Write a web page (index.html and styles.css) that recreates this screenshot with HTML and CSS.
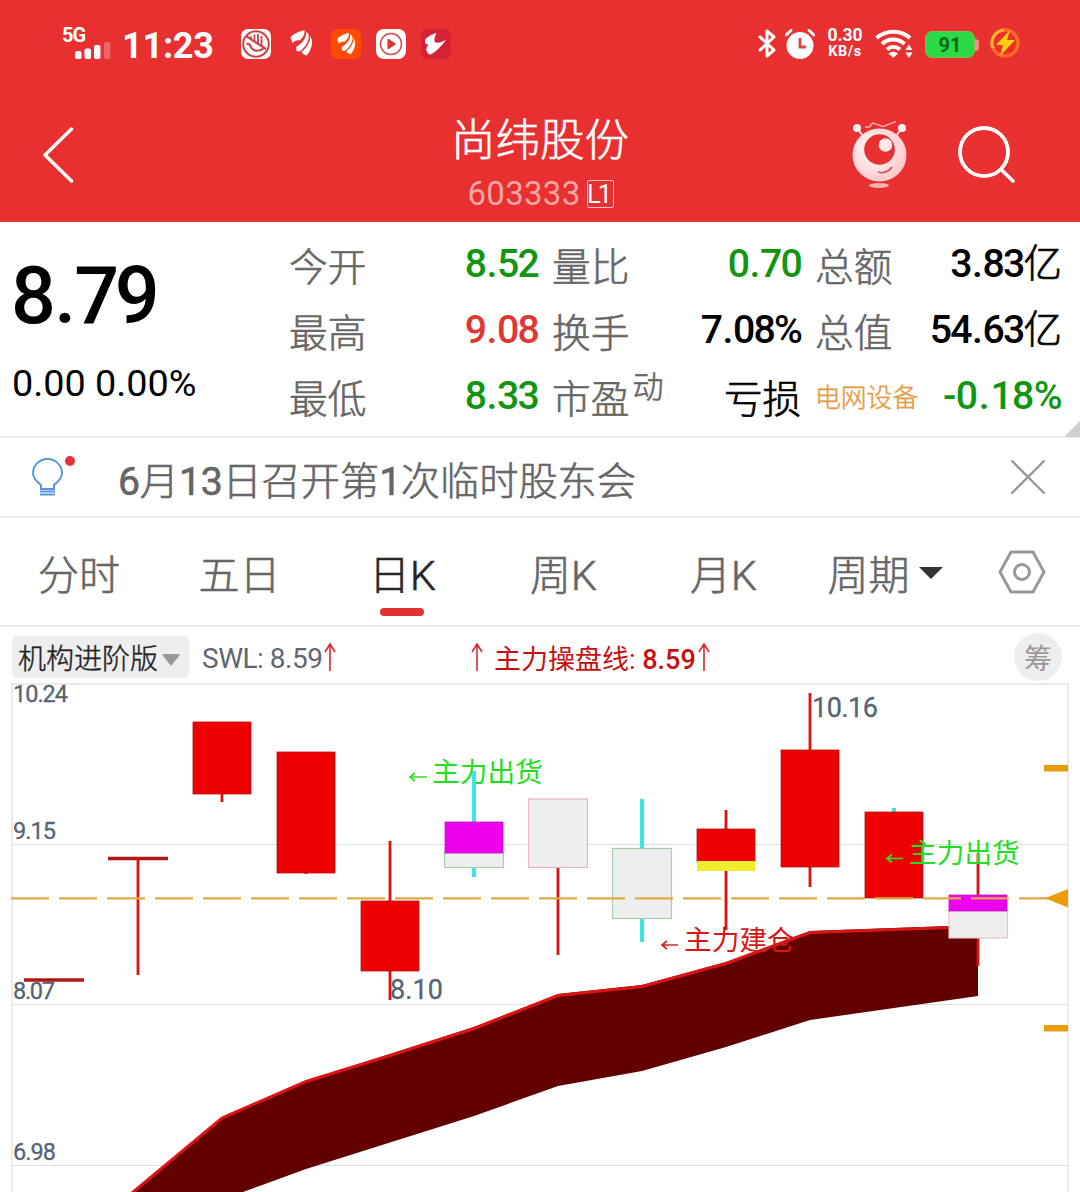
FILE: index.html
```html
<!DOCTYPE html>
<html lang="zh-CN">
<head>
<meta charset="utf-8">
<title>尚纬股份 603333</title>
<link rel="stylesheet" href="styles.css">
</head>
<body>
<header class="top">
  <div class="status">
    <div class="signal">
      <span class="net">5G</span>
      <svg width="36" height="17" viewBox="0 0 36 17"><g fill="#fff"><rect x="0" y="9" width="6.500" height="8" rx="2"/><rect x="9.500" y="6.500" width="6.500" height="10.500" rx="2"/><rect x="19" y="3" width="6.500" height="14" rx="2"/><rect x="29" y="0" width="6.500" height="17" rx="2" opacity=".25"/></g></svg>
    </div>
    <span class="clock">11:23</span>
    <div class="apps">
      <svg width="30" height="30" viewBox="0 0 30 30"><rect width="30" height="30" rx="7" fill="#fff"/><circle cx="15" cy="15" r="12.800" fill="none" stroke="#c94444" stroke-width="2"/><path d="M5 7 25 20" stroke="#c94444" stroke-width="2.200"/><path d="M10 7.500v2.500M13.500 5.500v7M17 5v10M20.500 7v10" stroke="#c94444" stroke-width="1.800"/><path d="M5.500 14.500 8.500 15.500 10.500 19C13 23 19 22.500 24 18.500" fill="none" stroke="#c94444" stroke-width="2.200"/></svg>
      <svg width="30" height="30" viewBox="0 0 30 30"><g fill="#fff"><path d="M18.500 1C12 3 7 5 4.500 8.500L6.500 14c2-2 4-3 7-2.500C17 9 19 5 18.500 1z"/><path d="M20.500 2.500C20 9 17 14 10 18l.5 4 3 .5C20 18 23 12 22.800 6z"/><path d="M24 6.500c.5 6-2.500 11.500-8.500 16.500l1.500 2 3.500 1.500C25 22 26.500 16 25.800 11z"/></g></svg>
      <svg width="30" height="30" viewBox="0 0 30 30"><rect width="30" height="30" rx="7" fill="#ff4a00"/><g fill="#fff" transform="translate(2.300 3) scale(.84)"><path d="M18.500 1C12 3 7 5 4.500 8.500L6.500 14c2-2 4-3 7-2.500C17 9 19 5 18.500 1z"/><path d="M20.500 2.500C20 9 17 14 10 18l.5 4 3 .5C20 18 23 12 22.800 6z"/><path d="M24 6.500c.5 6-2.500 11.500-8.500 16.500l1.500 2 3.500 1.500C25 22 26.500 16 25.800 11z"/></g></svg>
      <svg width="30" height="30" viewBox="0 0 30 30"><rect width="30" height="30" rx="8" fill="#fff"/><circle cx="15" cy="15" r="10.500" fill="none" stroke="#d84a4a" stroke-width="1.500"/><path d="M12 10v10l7.500-5z" fill="#d33" stroke="#d33" stroke-linejoin="round"/></svg>
      <svg width="30" height="30" viewBox="0 0 30 30"><rect width="30" height="30" rx="7" fill="#d32334"/><path d="M15.500 4C11 5.500 5 8 4 11.500c-.5 3 1.500 4 3.500 4-1.500 2-2.500 4-2 6 .5 2 2 4 4.500 4 3-2.500 7-4.500 9-7.500 2-2 4-4.500 6-7-4 2-8 3.500-10.500 2.500-2-1.500-1-5 1-9.500z" fill="#fff"/></svg>
    </div>
    <div class="sys">
      <svg class="bt" width="20" height="32" viewBox="0 0 20 32"><path d="M2 8 17 22 10 28V3l7 6L2 23" fill="none" stroke="#fff" stroke-width="3" stroke-linejoin="round"/></svg>
      <svg class="alarm" width="30" height="30" viewBox="0 0 30 30"><circle cx="15" cy="16.500" r="13.500" fill="#fff"/><path d="M1 6 6 1.500M29 6 24 1.500" stroke="#fff" stroke-width="3" stroke-linecap="round"/><path d="M15 9v9h6" fill="none" stroke="#d44" stroke-width="2.800"/></svg>
      <span class="speed"><b>0.30</b><b>KB/s</b></span>
      <svg class="wifi" width="40" height="30" viewBox="0 0 40 30"><g fill="none" stroke="#fff" stroke-width="4"><path d="M1.500 9C11 .5 26 .5 35 9"/><path d="M7 15c6-6 16-6 22.500 0"/><path d="M12 20.500c4-3.500 9-3.500 13 0"/></g><path d="M13.500 24.500c3-2.500 6.500-2.500 9.500 0L18.200 29z" fill="#fff"/><path d="M30.500 21h7L34 15.500zM30.500 23.500h7L34 29z" fill="#fff"/></svg>
      <span class="battery">91</span>
      <svg class="charge" width="32" height="32" viewBox="0 0 32 32"><circle cx="16" cy="16" r="13" fill="none" stroke="#ff6b24" stroke-width="3.500"/><path d="M4 21A13 13 0 0 1 15 3" fill="none" stroke="#ffb32e" stroke-width="3"/><path d="M21 3 7 18h7l-3 11 15-16h-8z" fill="#ffcf08"/></svg>
    </div>
  </div>
  <div class="nav">
    <svg class="back" width="32" height="56" viewBox="0 0 32 56"><path d="M28.500 2 2 28l26.500 26" fill="none" stroke="#fff" stroke-width="3.500" stroke-linecap="round" stroke-linejoin="round"/></svg>
    <div class="title">
      <h1>尚纬股份</h1>
      <div class="code"><span>603333</span><i>L1</i></div>
    </div>
    <svg class="robot" width="58" height="70" viewBox="850 119 58 70">
      <defs><radialGradient id="skin" cx=".4" cy=".4" r=".65"><stop offset="0" stop-color="#fff"/><stop offset="1" stop-color="#ffc6c9"/></radialGradient></defs>
      <path d="M865 127h4l4-4 10 3.500 13-5" fill="none" stroke="#ffc3c3" stroke-width="1.300"/>
      <path d="M857 128l6 8M902 128l-6 8" stroke="#ffe5e5" stroke-width="2"/>
      <circle cx="857" cy="128" r="4" fill="#fff0f0"/><circle cx="902" cy="128" r="4" fill="#fff0f0"/>
      <ellipse cx="879.500" cy="155" rx="27" ry="26.500" fill="url(#skin)"/>
      <circle cx="879.500" cy="149.500" r="15.300" fill="#e83030"/><circle cx="885.500" cy="145" r="6.800" fill="#ffe9e9"/>
      <path d="M878 172c5 1.500 11 0 14-5" fill="none" stroke="#dd5555" stroke-width="1.800"/>
      <ellipse cx="879" cy="185.500" rx="10" ry="2.500" fill="#ffb3b3"/>
    </svg>
    <svg class="search" width="60" height="60" viewBox="956 124 60 60"><g fill="none" stroke="#fff" stroke-width="3.800" stroke-linecap="round"><circle cx="984" cy="152" r="24"/><path d="M1001 169.500l12 11.500"/></g></svg>
  </div>
</header>

<section class="quote">
  <div class="last"><strong>8<u>.</u>79</strong><span>0.00 0.00%</span></div>
  <dl class="stats">
    <div><dt>今开</dt><dd class="down">8<u>.</u>52</dd></div>
    <div><dt>量比</dt><dd class="down">0<u>.</u>70</dd></div>
    <div><dt>总额</dt><dd>3<u>.</u>83<em>亿</em></dd></div>
    <div><dt>最高</dt><dd class="up">9<u>.</u>08</dd></div>
    <div><dt>换手</dt><dd>7<u>.</u>08%</dd></div>
    <div><dt>总值</dt><dd>54<u>.</u>63<em>亿</em></dd></div>
    <div><dt>最低</dt><dd class="down">8<u>.</u>33</dd></div>
    <div><dt>市盈<sup>动</sup></dt><dd class="word"><em>亏损</em></dd></div>
    <div><dt class="sector">电网设备</dt><dd class="down wide">-0<u>.</u>18%</dd></div>
  </dl>
  <i class="corner"></i>
</section>

<section class="notice">
  <svg width="50" height="44" viewBox="30 456 50 44"><g fill="none" stroke="#5b97d8" stroke-width="2"><path d="M41 490v-4c-4-3-8-7-8-12a14.500 14 0 0 1 29 0c0 5-4 9-8 12v4z"/><path d="M40 492.500h15M40 495.500h15"/></g><circle cx="70" cy="462" r="5" fill="#e03434"/></svg>
  <p><b>6</b>月<b>13</b>日召开第<b>1</b>次临时股东会</p>
  <svg class="close" width="36" height="36" viewBox="0 0 36 36"><path d="M2 2l32 32M34 2 2 34" stroke="#999" stroke-width="2.400" stroke-linecap="round"/></svg>
</section>

<nav class="tabs">
  <span>分时</span><span>五日</span><span class="on">日K</span><span>周K</span><span>月K</span>
  <span class="period">周期<svg width="24" height="12" viewBox="0 0 24 12"><path d="M0 0h24L12 12z" fill="#333"/></svg></span>
  <svg class="gear" width="48" height="44" viewBox="0 0 48 44"><g fill="none" stroke="#999" stroke-width="3" stroke-linejoin="round"><path d="M13 2h22l11 20-11 20H13L2 22z"/><circle cx="24" cy="22" r="7.500"/></g></svg>
</nav>

<section class="legend">
  <span class="select">机构进阶版<svg width="18" height="12" viewBox="0 0 18 12"><path d="M1 0h16q1 1 0 2L9 12 1 2Q0 1 1 0z" fill="#999"/></svg></span>
  <span class="swl">SWL: 8.59</span>
  <svg class="rise" width="12" height="30" viewBox="0 0 12 30"><path d="M6 2v27M1 10 6 2l5 8" fill="none" stroke="#d52a2a" stroke-width="1.600"/></svg>
  <svg class="rise second" width="12" height="30" viewBox="0 0 12 30"><path d="M6 2v27M1 10 6 2l5 8" fill="none" stroke="#d52a2a" stroke-width="1.600"/></svg>
  <span class="main">主力操盘线: <b>8.59</b></span>
  <svg class="rise" width="12" height="30" viewBox="0 0 12 30"><path d="M6 2v27M1 10 6 2l5 8" fill="none" stroke="#d52a2a" stroke-width="1.600"/></svg>
  <span class="chips">筹</span>
</section>

<svg class="chart" width="1080" height="509" viewBox="0 683 1080 509">
  <g class="grid"><path d="M12 1192V684H1068V1192"/><path d="M12 844.500H1068M12 1004.500H1068M12 1165.500H1068" class="thin"/></g>
  <path class="band" d="M133 1192 222 1117 306 1081 390 1054 474 1027 558 994 642 985 726 962 810 931 978 925V996L810 1020 726 1047 642 1071 558 1086 474 1116 306 1169 243 1192z"/>
  <path class="trend" d="M132 1193 222 1118 306 1081.500 390 1055.500 474 1028.500 558 995.500 642 986.500 726 963.500 810 932.500 978 926.500"/>
  <g class="axis">
    <text x="13" y="702" textLength="55">10.24</text><text x="13" y="839" textLength="43">9.15</text><text x="13" y="999" textLength="42">8.07</text><text x="13" y="1160" textLength="43">6.98</text>
  </g>
  <g class="signal-text">
    <text x="432" y="781.500" class="sell">主力出货</text><path d="M427 777H410M415 773l-5 4 5 4" class="sell-arrow"/>
    <text x="684" y="949.500" class="buy">主力建仓</text><path d="M678 945H662M667 941l-5 4 5 4" class="buy-arrow"/>
  </g>
  <g class="flat"><path d="M24 980H84M108 858.500H168"/></g>
  <g class="wick"><path d="M138 858V975M222 793V802M306 872V874M390 841V1000M558 866V955M726 810V930M810 693V887M978 853V966"/></g>
  <g class="wick cool"><path d="M474 771V823M474 866V877M642 799V849M642 917V942M894 808V813"/></g>
  <g class="red"><rect x="193" y="722" width="58" height="72"/><rect x="277" y="752" width="58" height="121"/><rect x="361" y="901" width="58" height="70"/><rect x="697" y="829" width="58" height="33"/><rect x="781" y="750" width="58" height="117"/><rect x="865" y="812" width="58" height="86"/></g>
  <g class="gray"><rect x="444.500" y="852.500" width="59" height="15" stroke="#a9cfa9"/><rect x="528.500" y="799" width="59" height="68.500" stroke="#e9b5b5"/><rect x="612.500" y="848.500" width="59" height="70" stroke="#a9cfa9"/><rect x="949" y="910" width="58.500" height="28" stroke="#edc0c0"/></g>
  <g class="magenta"><rect x="445" y="822" width="58" height="31"/><rect x="949" y="895" width="58" height="16"/></g>
  <rect x="697" y="861" width="58" height="10" fill="#f0ec30"/>
  <path d="M11 898.300H1048" class="cost"/>
  <path d="M1045 898.300 1068 889V907.500zM1044 765h24v6.500h-24zM1044 1025h24v6.500h-24z" fill="#eb9d08"/>
  <text x="909" y="862.500" class="sell">主力出货</text><path d="M903 858.500H887M892 854.500l-5 4 5 4" class="sell-arrow"/>
  <g class="extreme"><text x="812" y="717" textLength="66">10.16</text><text x="390" y="999" textLength="53">8.10</text></g>
</svg>
</body>
</html>
```
FILE: styles.css
```css
* { box-sizing: border-box; margin: 0; padding: 0; }
html, body { width: 1080px; height: 1192px; overflow: hidden; }
body { background: #fff; color: #000; font-family: Roboto, "Noto Sans CJK SC", sans-serif; font-weight: 400; }
svg { display: block; flex: none; }
em, i { font-style: normal; }

.top { height: 222px; background: #e83030; color: #fff; }
.status { display: flex; height: 88px; padding-left: 62px; align-items: center; }
.signal { width: 60px; height: 34px; flex: none; display: flex; flex-direction: column; }
.net { font-size: 20px; line-height: 16px; font-weight: 700; letter-spacing: -1px; }
.signal svg { margin-left: 13px; margin-top: -1px; }
.clock { width: 118px; font-size: 36px; line-height: 40px; font-weight: 700; margin-top: 3px; letter-spacing: -0.2px; }
.apps { display: flex; gap: 15px; margin-left: 1px; }
.sys { display: flex; align-items: center; margin-left: 306px; }
.alarm { margin-left: 8px; }
.speed { display: flex; flex-direction: column; width: 36px; margin-left: 12px; align-items: center; }
.speed b { font-size: 17.5px; line-height: 17px; margin-top: -1px; }
.speed b + b { font-size: 14.5px; line-height: 16px; margin-top: 0; letter-spacing: 0.5px; }
.wifi { margin-left: 12px; }
.battery { position: relative; width: 50px; height: 27px; margin-left: 10px; border: 1px solid #8fb94e; border-radius: 7px; background: #2bd846; color: #0b6b1c; font-size: 20px; line-height: 26px; font-weight: 700; text-align: center; }
.battery::after { content: ""; position: absolute; right: -5px; top: 7px; width: 4px; height: 12px; border-radius: 0 4px 4px 0; background: #f58d8d; }
.charge { margin-left: 14px; margin-top: -3px; }

.nav { height: 134px; display: flex; align-items: flex-start; padding: 25px 64px 0 43px; }
.back { margin-top: 14px; }
.title { width: 260px; margin-left: 335px; text-align: center; }
h1 { font-size: 44.5px; line-height: 56px; font-weight: 300; -webkit-text-stroke: 0.6px currentColor; }
.code { display: flex; justify-content: center; align-items: center; gap: 6px; height: 34px; margin: 8px 0 0 1px; font-size: 33px; color: #f9a5a5; }
.code span { line-height: 34px; letter-spacing: 0.3px; }
.code i { width: 27px; height: 28px; border: 1.5px solid #ffc3c3; border-radius: 2px; color: #fff; font-size: 25.5px; line-height: 26px; letter-spacing: -3px; text-indent: -4px; }
.robot { margin: 6px 0 0 180px; }
.search { margin: 11px 0 0 48px; }

.quote { position: relative; height: 216px; border-bottom: 2px solid #ededed; display: flex; }
.quote u { text-decoration: none; padding: 0 0.035em; }
.last { width: 289px; padding: 32px 0 0 12px; display: flex; flex-direction: column; }
.last strong { font-size: 79px; line-height: 84px; font-weight: 500; letter-spacing: -4.5px; margin-left: -1px; }
.last span { font-size: 37.8px; line-height: 44px; margin-top: 23px; }
.stats { display: grid; grid-template-columns: 249px 249px 247px; grid-template-rows: repeat(3, 66px); column-gap: 14px; padding-top: 9px; }
.stats > div { display: flex; justify-content: space-between; align-items: center; line-height: 56px; }
dt { font-size: 38.7px; color: #666; font-weight: 300; padding-top: 8px; white-space: nowrap; -webkit-text-stroke: 0.6px currentColor; }
dt sup { font-size: 31px; line-height: 0; vertical-align: 15px; margin-left: 3px; }
dt.sector { font-size: 25.8px; color: #e69a40; padding-top: 3px; -webkit-text-stroke: 0.4px currentColor; }
dd { font-size: 39.2px; font-weight: 500; letter-spacing: -1.8px; white-space: nowrap; }
dd u { padding: 0 0.05em; }
dd.wide { letter-spacing: -0.6px; }
dd.word { padding-top: 8px; }
dd em { font-size: 38.5px; font-weight: 300; letter-spacing: 0; -webkit-text-stroke: 0.7px currentColor; }
.up { color: #e03636; }
.down { color: #129612; }
.corner { position: absolute; right: 0; bottom: -1px; border: 8.5px solid; border-color: transparent #d0d0d0 #d0d0d0 transparent; }

.notice { height: 80px; border-bottom: 2px solid #ededed; display: flex; align-items: center; padding: 0 34px 0 30px; color: #666; }
.notice p { margin-left: 38px; font-size: 39.2px; line-height: 56px; padding-top: 9px; flex: 1; white-space: nowrap; font-weight: 300; -webkit-text-stroke: 0.6px currentColor; }
.notice b { font-weight: 400; letter-spacing: -0.3px; }

.tabs { height: 109px; border-bottom: 2px solid #ededed; display: grid; grid-template-columns: 158px 163px 163px 159px 161px 162px 1fr; color: #666; font-size: 41px; line-height: 60px; font-weight: 300; padding-top: 28px; -webkit-text-stroke: 0.6px currentColor; }
.tabs span { text-align: center; }
.tabs .on { position: relative; color: #262626; }
.tabs .on::after { content: ""; position: absolute; left: 59px; top: 62px; width: 44px; height: 8px; border-radius: 4px; background: #e03030; }
.tabs .period { display: flex; align-items: center; justify-content: center; gap: 9px; height: 60px; }
.period svg { margin-top: -6px; }
.gear { margin: 4px 0 0 32px; }

.legend { display: flex; height: 56px; align-items: center; padding: 4px 18px 0 12px; font-size: 27px; line-height: 40px; }
.select { display: flex; align-items: center; gap: 4px; width: 177px; height: 42px; padding: 6px 0 0 6px; border-radius: 5px; background: #eee; font-size: 28px; color: #222; font-weight: 300; -webkit-text-stroke: 0.4px currentColor; }
.select svg { margin-top: -1px; }
.swl { margin: 3px 0 0 13px; width: 122px; font-size: 28px; letter-spacing: -0.5px; color: #5f6670; white-space: nowrap; }
.second { margin-left: 135px; }
.main { width: 204px; margin: 5px 0 0 11px; color: #c80f0f; white-space: nowrap; }
.main b { font-weight: 500; }
.chips { width: 48px; height: 48px; margin-left: auto; border-radius: 50%; background: #eee; color: #999; font-size: 28px; line-height: 54px; text-align: center; }

.chart { font-family: Roboto, "Noto Sans CJK SC", sans-serif; overflow: visible; }
.grid { fill: none; stroke: #ebebeb; stroke-width: 2; }
.grid .thin { stroke: #dedede; stroke-width: 1.2; }
.band { fill: #620000; }
.trend { fill: none; stroke: #dc1414; stroke-width: 3; }
.axis { font-size: 23.5px; fill: #566472; stroke: #566472; stroke-width: .3; }
.extreme { font-size: 27px; fill: #566472; stroke: #566472; stroke-width: .3; }
.sell, .buy { font-size: 27.7px; fill: #1fe01f; }
.buy { fill: #d91616; }
.sell-arrow, .buy-arrow { fill: none; stroke: #36dd20; stroke-width: 1.7; }
.buy-arrow { stroke: #c92a2a; }
.flat { stroke: #b01818; stroke-width: 3.5; }
.wick { stroke: #dc1111; stroke-width: 2.8; stroke-linecap: butt; }
.cool { stroke: #35e5e5; stroke-width: 3.8; }
.red { fill: #ee0000; stroke: #b71313; stroke-width: .8; }
.gray { fill: #eee; stroke-width: 1.2; }
.magenta { fill: #ee00ee; stroke: #b719b7; stroke-width: .8; }
.cost { stroke: #deaa45; stroke-width: 2.2; stroke-dasharray: 38 10; }
```
